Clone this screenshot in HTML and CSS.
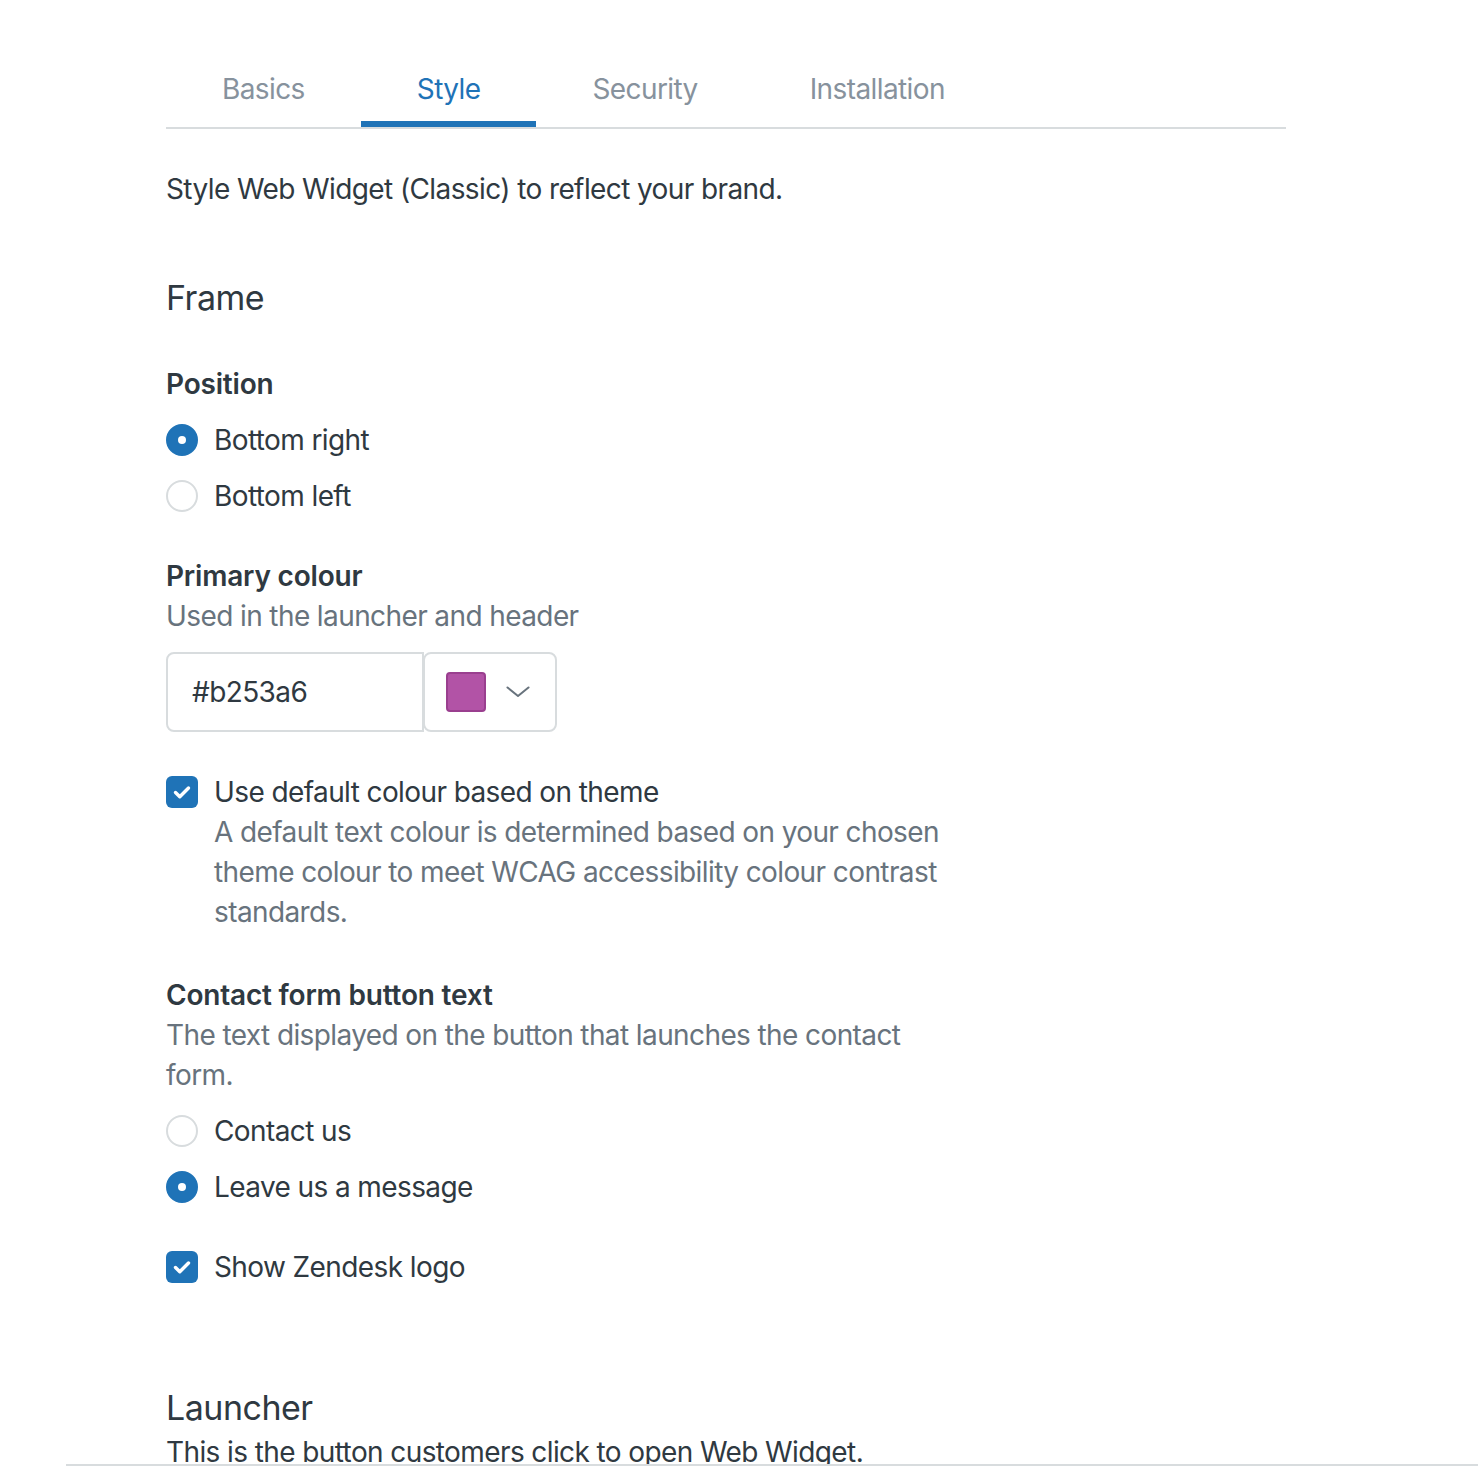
FILE: index.html
```html
<!DOCTYPE html>
<html lang="en">
<head>
<meta charset="utf-8">
<title>Web Widget (Classic) – Style</title>
<link rel="stylesheet" href="styles.css">
</head>
<body>
<div class="page">
  <div class="content">
    <nav class="tabs">
      <div class="tab">Basics</div>
      <div class="tab tab-active">Style</div>
      <div class="tab">Security</div>
      <div class="tab">Installation</div>
    </nav>

    <p class="intro">Style Web Widget (Classic) to reflect your brand.</p>

    <h2 class="section-title">Frame</h2>

    <div class="field">
      <div class="label">Position</div>
      <div class="options">
        <div class="option"><span class="radio radio-on"></span><span class="option-text">Bottom right</span></div>
        <div class="option"><span class="radio"></span><span class="option-text">Bottom left</span></div>
      </div>
    </div>

    <div class="field">
      <div class="label">Primary colour</div>
      <div class="hint">Used in the launcher and header</div>
      <div class="color-picker">
        <div class="color-input">#b253a6</div>
        <div class="color-button">
          <span class="swatch"></span>
          <svg class="chevron" width="24" height="12" viewBox="0 0 24 12"><path d="M1.5 1.5 L12 10 L22.5 1.5" fill="none" stroke="#68737d" stroke-width="2" stroke-linecap="round" stroke-linejoin="round"/></svg>
        </div>
      </div>
    </div>

    <div class="field">
      <div class="check-row">
        <span class="checkbox"><svg width="32" height="32" viewBox="0 0 32 32"><path d="M9.5 16.5 L13.8 20.8 L22.5 12" fill="none" stroke="#fff" stroke-width="3.4" stroke-linecap="round" stroke-linejoin="round"/></svg></span>
        <div class="check-body">
          <div class="option-text">Use default colour based on theme</div>
          <div class="hint">A default text colour is determined based on your chosen theme colour to meet WCAG accessibility colour contrast standards.</div>
        </div>
      </div>
    </div>

    <div class="field field-contact">
      <div class="label">Contact form button text</div>
      <div class="hint">The text displayed on the button that launches the contact form.</div>
      <div class="options">
        <div class="option"><span class="radio"></span><span class="option-text">Contact us</span></div>
        <div class="option"><span class="radio radio-on"></span><span class="option-text">Leave us a message</span></div>
      </div>
    </div>

    <div class="field">
      <div class="check-row">
        <span class="checkbox"><svg width="32" height="32" viewBox="0 0 32 32"><path d="M9.5 16.5 L13.8 20.8 L22.5 12" fill="none" stroke="#fff" stroke-width="3.4" stroke-linecap="round" stroke-linejoin="round"/></svg></span>
        <div class="check-body">
          <div class="option-text">Show Zendesk logo</div>
        </div>
      </div>
    </div>

    <h2 class="section-title section-launcher">Launcher</h2>
    <p class="section-desc">This is the button customers click to open Web Widget.</p>
  </div>
</div>
<div class="footer-bar"></div>
</body>
</html>
```

FILE: styles.css
```css
* { box-sizing: border-box; }

html, body {
  margin: 0;
  padding: 0;
  background: #ffffff;
  overflow: hidden;
  height: 100%;
}

body {
  font-family: Inter, "Noto Sans", "Liberation Sans", sans-serif;
  font-size: 28px;
  line-height: 40px;
  letter-spacing: -0.6px;
  color: #2f3941;
}

.page {
  margin-left: 66px;
}

.content {
  padding: 57px 0 0 100px;
  width: 1220px;
}

.tabs {
  display: flex;
  border-bottom: 2px solid #d8dcde;
}

.tab {
  padding: 12px 56px;
  border-bottom: 6px solid transparent;
  color: #87929d;
  white-space: nowrap;
}

.tab-active {
  color: #1f73b7;
  border-bottom-color: #1f73b7;
}

.intro {
  margin: 40px 0 0;
}

.section-title {
  margin: 65px 0 0;
  font-size: 34px;
  line-height: 48px;
  letter-spacing: -0.5px;
  font-weight: 400;
  color: #2f3941;
}

.field {
  margin-top: 40px;
  width: 780px;
}

.section-title + .field {
  margin-top: 42px;
}

.field-contact {
  margin-top: 43px;
}

.label {
  font-weight: 600;
  letter-spacing: -0.2px;
}

.hint {
  color: #68737d;
}

.options {
  display: flex;
  flex-direction: column;
  gap: 16px;
  margin-top: 16px;
}

.option {
  display: flex;
  align-items: center;
}

.option-text {
  color: #2f3941;
}

.radio {
  flex: none;
  width: 32px;
  height: 32px;
  border-radius: 50%;
  border: 2px solid #d8dcde;
  background: #fff;
  margin-right: 16px;
  position: relative;
}

.radio-on {
  border-color: #1f73b7;
  background: #1f73b7;
}

.radio-on::after {
  content: "";
  position: absolute;
  left: 50%;
  top: 50%;
  width: 8px;
  height: 8px;
  margin: -4px 0 0 -4px;
  border-radius: 50%;
  background: #fff;
}

.color-picker {
  display: flex;
  margin-top: 16px;
  height: 80px;
}

.color-input {
  width: 258px;
  border: 2px solid #d8dcde;
  border-radius: 8px 0 0 8px;
  padding: 0 24px;
  display: flex;
  align-items: center;
  color: #2f3941;
}

.color-button {
  width: 134px;
  margin-left: -1px;
  border: 2px solid #d8dcde;
  border-radius: 8px;
  display: flex;
  align-items: center;
  padding-left: 21px;
  gap: 20px;
}

.swatch {
  width: 40px;
  height: 40px;
  border-radius: 4px;
  background: #b253a6;
  border: 2px solid #9a3f8f;
}

.chevron {
  display: block;
}

.check-row {
  display: flex;
  align-items: flex-start;
}

.checkbox {
  flex: none;
  width: 32px;
  height: 32px;
  margin-top: 4px;
  margin-right: 16px;
  border-radius: 6px;
  background: #1f73b7;
}

.checkbox svg {
  display: block;
}

.check-body {
  flex: 1;
}

.section-launcher {
  margin-top: 97px;
}

.section-desc {
  margin: 0;
}

.footer-bar {
  position: fixed;
  left: 66px;
  right: 0;
  top: 1464px;
  height: 4px;
  border-top: 2px solid #d8dcde;
  background: #fff;
}
```
